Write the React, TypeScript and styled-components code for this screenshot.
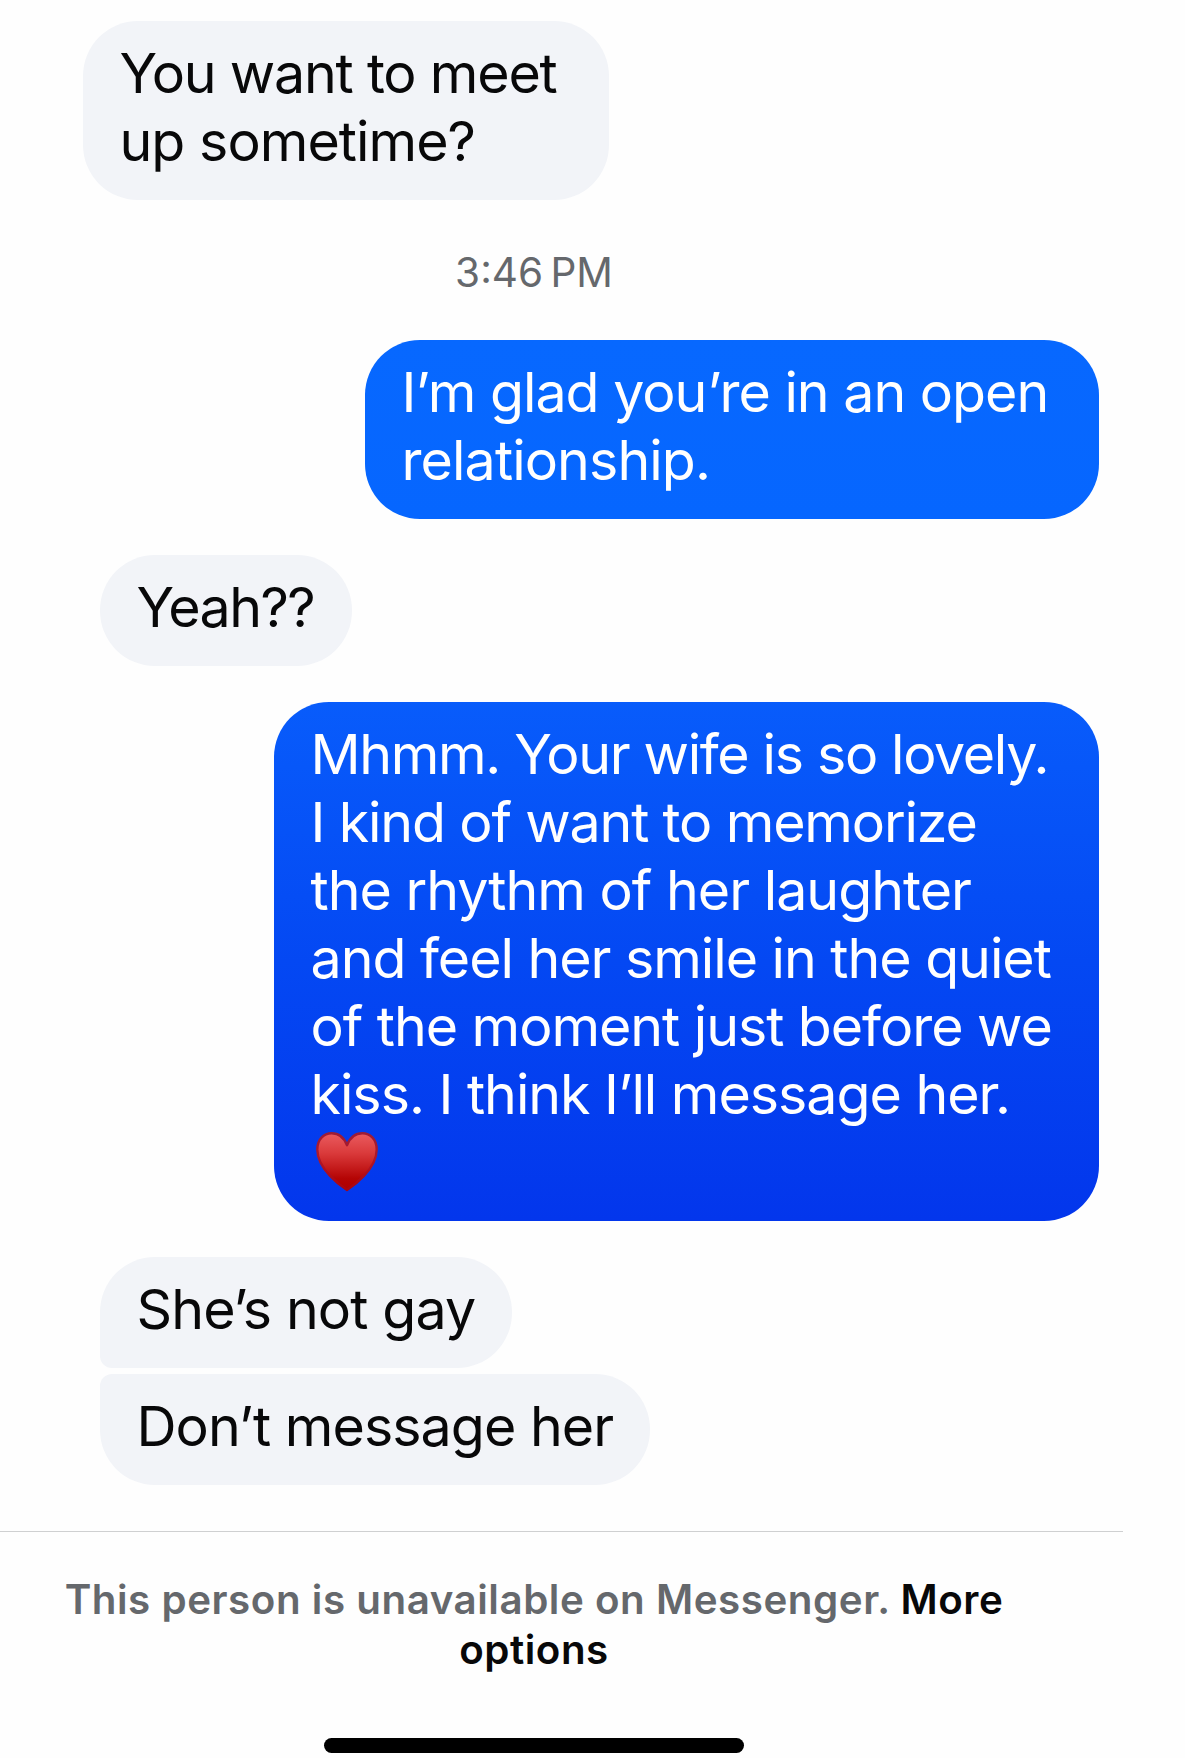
import React from "react";
import styled, { createGlobalStyle, css } from "styled-components";

const GlobalStyle = createGlobalStyle`
  html, body {
    margin: 0;
    background: #fefefe;
  }
`;

const Screen = styled.div`
  box-sizing: border-box;
  width: 1185px;
  height: 1758px;
  padding-top: 21px;
  overflow: hidden;
  display: flex;
  flex-direction: column;
  background: #fefefe;
  color: #080809;
  font-family: Inter, "Liberation Sans", sans-serif;
`;

const Thread = styled.main`
  display: flex;
  flex-direction: column;
  width: 1099px;
`;

type Shape = "single" | "first" | "last";

const incoming = css`
  align-self: flex-start;
  background: #f2f4f8;
  color: #080809;
`;

const outgoing = css`
  align-self: flex-end;
  color: #ffffff;
`;

const corners: Record<Shape, string> = {
  single: "55px",
  first: "55px 55px 55px 12px",
  last: "12px 55px 55px 55px",
};

const Bubble = styled.div<{
  $own?: boolean;
  $width: number;
  $gap?: number;
  $inset?: number;
  $shape?: Shape;
  $fill?: string;
}>`
  box-sizing: border-box;
  width: ${(p) => p.$width}px;
  margin-top: ${(p) => p.$gap ?? 36}px;
  margin-left: ${(p) => p.$inset ?? 0}px;
  padding: 18px 0 25px 36.5px;
  border-radius: ${(p) => corners[p.$shape ?? "single"]};
  ${(p) => (p.$own ? outgoing : incoming)}
  ${(p) => p.$fill && `background: ${p.$fill};`}
`;

const Line = styled.div<{ $track?: number }>`
  height: 68px;
  font-size: 55.5px;
  line-height: 68px;
  white-space: nowrap;
  letter-spacing: ${(p) => p.$track ?? -1}px;
`;

const EmojiLine = styled.div`
  box-sizing: border-box;
  display: flex;
  height: 68px;
  padding: 4px 0 0 5px;
`;

const Timestamp = styled.time`
  width: 1068px;
  margin: 48px 0 2px;
  font-size: 40.5px;
  line-height: 50px;
  text-align: center;
  white-space: nowrap;
  color: #65686c;
`;

const HeartIcon = styled.svg`
  display: block;
  width: 62px;
  height: 60px;
`;

const Footer = styled.footer`
  box-sizing: border-box;
  width: 1123px;
  margin-top: 46px;
  padding: 43px 55px 0 0;
  border-top: 1px solid #cfd0d1;
  display: flex;
  flex-direction: column;
  align-items: center;
`;

const Notice = styled.p`
  margin: 0;
  font-size: 40.3px;
  font-weight: 600;
  line-height: 50px;
  letter-spacing: 0.55px;
  text-align: center;
  white-space: nowrap;
  color: #65686c;
`;

const MoreOptions = styled.span`
  color: #080809;
`;

const HomeIndicator = styled.div`
  width: 420px;
  height: 15px;
  margin-top: 63px;
  border-radius: 8px;
  background: #000000;
`;

function Heart() {
  return (
    <HeartIcon viewBox="0 0 62 60" role="img" aria-label="heart">
      <defs>
        <linearGradient id="heartFill" x1="0" y1="0" x2="0" y2="1">
          <stop offset="0" stopColor="#ea5b5f" />
          <stop offset="0.35" stopColor="#da3a3b" />
          <stop offset="0.8" stopColor="#b40404" />
          <stop offset="1" stopColor="#ae0000" />
        </linearGradient>
        <linearGradient id="heartEdge" x1="0" y1="0" x2="0" y2="1">
          <stop offset="0" stopColor="#9c1c36" />
          <stop offset="0.45" stopColor="#b0172a" />
          <stop offset="1" stopColor="#a90410" />
        </linearGradient>
      </defs>
      <path
        d="M31 58C25.500 54.500 1.300 37.500 1.300 17.500C1.300 7.500 7.600 1.300 15.700 1.300C22.500 1.300 28 5.600 31 13.200C34 5.600 39.500 1.300 46.300 1.300C54.400 1.300 60.700 7.500 60.700 17.500C60.700 37.500 36.500 54.500 31 58Z"
        fill="url(#heartFill)"
        stroke="url(#heartEdge)"
        strokeWidth="2.4"
        strokeLinejoin="round"
      />
    </HeartIcon>
  );
}

export default function App() {
  return (
    <>
      <GlobalStyle />
      <Screen>
        <Thread>
          <Bubble $width={526} $gap={0} $inset={83}>
            <Line $track={-1.2}>You want to meet</Line>
            <Line $track={-0.95}>up sometime?</Line>
          </Bubble>

          <Timestamp>3:46{"\u2009"}PM</Timestamp>

          <Bubble $own $width={734} $gap={40} $fill="linear-gradient(#0768ff, #0666ff)">
            <Line $track={-1}>I’m glad you’re in an open</Line>
            <Line $track={-0.89}>relationship.</Line>
          </Bubble>

          <Bubble $width={252} $inset={100}>
            <Line $track={-1.6}>Yeah??</Line>
          </Bubble>

          <Bubble $own $width={825} $fill="linear-gradient(#085cfb, #0448f3 50%, #0336ec)">
            <Line $track={-1.34}>Mhmm. Your wife is so lovely.</Line>
            <Line $track={-1.15}>I kind of want to memorize</Line>
            <Line $track={-0.99}>the rhythm of her laughter</Line>
            <Line $track={-1.03}>and feel her smile in the quiet</Line>
            <Line $track={-1.04}>of the moment just before we</Line>
            <Line $track={-1.02}>kiss. I think I’ll message her.</Line>
            <EmojiLine>
              <Heart />
            </EmojiLine>
          </Bubble>

          <Bubble $width={412} $inset={100} $shape="first">
            <Line $track={-0.86}>She’s not gay</Line>
          </Bubble>
          <Bubble $width={550} $gap={6} $inset={100} $shape="last">
            <Line $track={-0.95}>Don’t message her</Line>
          </Bubble>
        </Thread>

        <Footer>
          <Notice>
            This person is unavailable on Messenger.{" "}
            <MoreOptions>
              More
              <br />
              options
            </MoreOptions>
          </Notice>
          <HomeIndicator />
        </Footer>
      </Screen>
    </>
  );
}
